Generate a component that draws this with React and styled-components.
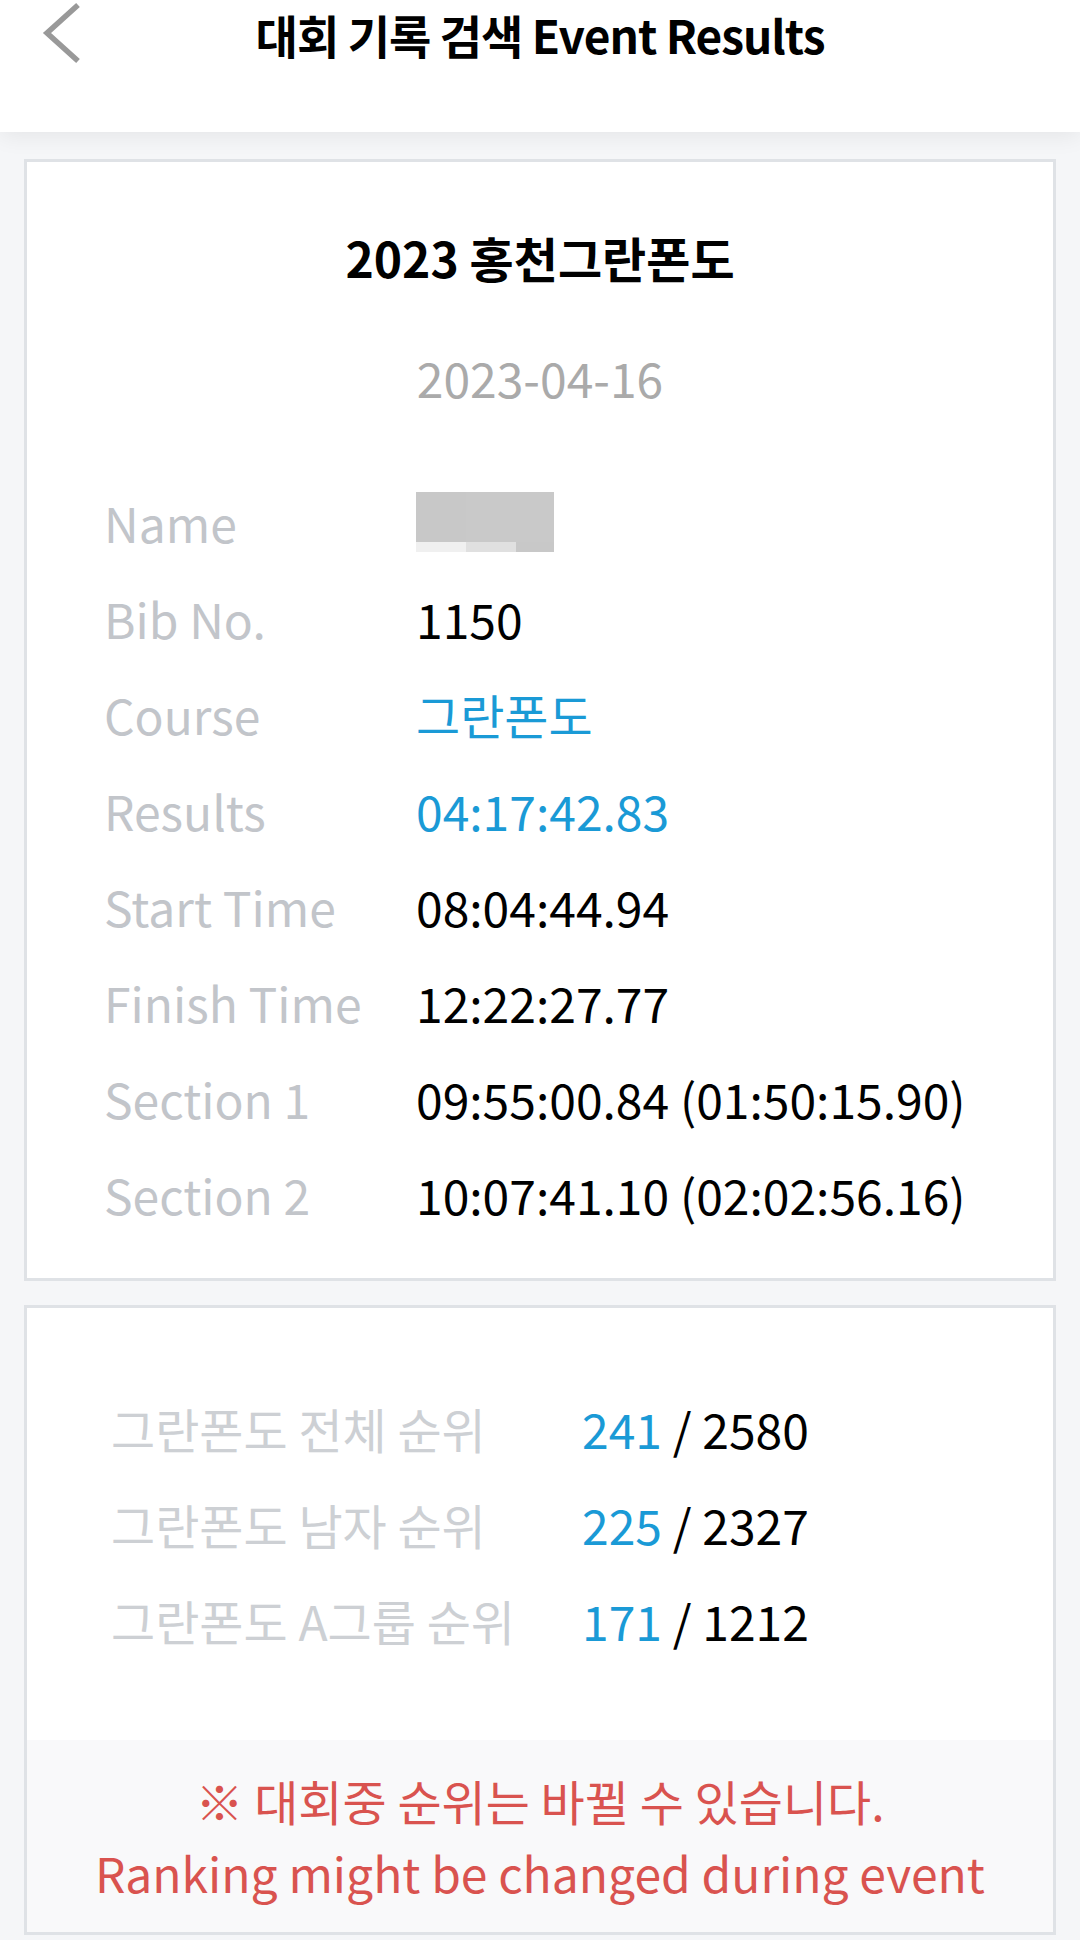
import React from "react";
import styled, { createGlobalStyle } from "styled-components";

const Global = createGlobalStyle`
  html, body { margin: 0; padding: 0; background: #f5f6f8; }
  body { font-family: "Noto Sans CJK KR", "Noto Sans", sans-serif; color: #111; }
`;

const Page = styled.div`
  width: 1080px;
  min-height: 1940px;
  background: #f5f6f8;
`;

const Header = styled.header`
  position: relative;
  z-index: 2;
  height: 132px;
  background: #fff;
  box-shadow: 0 4px 22px rgba(0, 0, 0, 0.07);
  display: grid;
  grid-template-columns: 1fr auto 1fr;
  align-items: start;
`;

const BackButton = styled.button`
  justify-self: start;
  margin: 2px 0 0 42px;
  padding: 0;
  border: 0;
  background: none;
  width: 40px;
  height: 64px;
  display: flex;
`;

const Title = styled.h1`
  margin: 0;
  font-size: 46px;
  line-height: 68px;
  font-weight: 700;
  letter-spacing: -1px;
  color: #000;
  white-space: nowrap;
`;

const Main = styled.main`
  padding: 27px 24px 0;
  display: flex;
  flex-direction: column;
  gap: 24px;
`;

const Card = styled.section`
  background: #fff;
  border: 3px solid #dfe2e6;
  display: flex;
  flex-direction: column;
`;

const InfoBody = styled.div`
  padding: 47px 0 36px;
  display: flex;
  flex-direction: column;
`;

const EventName = styled.h2`
  margin: 0;
  text-align: center;
  font-size: 48px;
  line-height: 96px;
  font-weight: 700;
  color: #000;
`;

const EventDate = styled.div`
  margin-top: 24px;
  text-align: center;
  font-size: 48px;
  line-height: 96px;
  color: #aaaaaa;
`;

const InfoTable = styled.div`
  margin-top: 49px;
  padding-left: 77px;
  display: grid;
  grid-template-columns: 312px 1fr;
  grid-auto-rows: 96px;
  font-size: 48px;
  line-height: 96px;
`;

const Label = styled.div`
  color: #c2c5ca;
  white-space: nowrap;
`;

const Value = styled.div`
  color: ${(p) => (p.$accent ? "#1a9ad6" : "#000")};
  white-space: nowrap;
  display: flex;
  align-items: center;
`;

const RankBody = styled.div`
  padding: 72px 0 72px 84px;
  display: grid;
  grid-template-columns: 471px 1fr;
  grid-auto-rows: 96px;
  font-size: 48px;
  line-height: 96px;
`;

const RankLabel = styled.div`
  color: #cdd0d4;
  white-space: nowrap;
`;

const RankValue = styled.div`
  color: #000;
  white-space: nowrap;
`;

const Rank = styled.span`
  color: #1a9ad6;
`;

const Notice = styled.div`
  background: #f9f9fa;
  padding: 24px 0;
  text-align: center;
  font-size: 48px;
  line-height: 72px;
  color: #d9534f;
`;

const NoticeLine = styled.div`
  white-space: nowrap;
`;

const Chevron = () => (
  <svg width="40" height="64" viewBox="0 0 40 64">
    <polyline points="36,3 5,31 36,59" fill="none" stroke="#999" strokeWidth="5.5" />
  </svg>
);

const Mosaic = () => (
  <svg width="138" height="60" viewBox="0 0 138 60">
    <rect x="0" y="0" width="50" height="50" fill="#c8c8c8" />
    <rect x="50" y="0" width="88" height="50" fill="#c9c9c9" />
    <rect x="0" y="50" width="50" height="10" fill="#f0f0f0" />
    <rect x="50" y="50" width="50" height="10" fill="#e0e0e0" />
    <rect x="100" y="50" width="38" height="10" fill="#c8c8c8" />
  </svg>
);

const info = [
  { label: "Bib No.", value: "1150" },
  { label: "Course", value: "그란폰도", accent: true },
  { label: "Results", value: "04:17:42.83", accent: true },
  { label: "Start Time", value: "08:04:44.94" },
  { label: "Finish Time", value: "12:22:27.77" },
  { label: "Section 1", value: "09:55:00.84 (01:50:15.90)" },
  { label: "Section 2", value: "10:07:41.10 (02:02:56.16)" },
];

const ranks = [
  { label: "그란폰도 전체 순위", rank: "241", total: "2580" },
  { label: "그란폰도 남자 순위", rank: "225", total: "2327" },
  { label: "그란폰도 A그룹 순위", rank: "171", total: "1212" },
];

export default function App() {
  return (
    <Page>
      <Global />
      <Header>
        <BackButton aria-label="back">
          <Chevron />
        </BackButton>
        <Title>대회 기록 검색 Event Results</Title>
        <div />
      </Header>
      <Main>
        <Card>
          <InfoBody>
            <EventName>2023 홍천그란폰도</EventName>
            <EventDate>2023-04-16</EventDate>
            <InfoTable>
              <Label>Name</Label>
              <Value>
                <Mosaic />
              </Value>
              {info.map((r) => (
                <React.Fragment key={r.label}>
                  <Label>{r.label}</Label>
                  <Value $accent={r.accent}>{r.value}</Value>
                </React.Fragment>
              ))}
            </InfoTable>
          </InfoBody>
        </Card>
        <Card>
          <RankBody>
            {ranks.map((r) => (
              <React.Fragment key={r.label}>
                <RankLabel>{r.label}</RankLabel>
                <RankValue>
                  <Rank>{r.rank}</Rank> / {r.total}
                </RankValue>
              </React.Fragment>
            ))}
          </RankBody>
          <Notice>
            <NoticeLine>※ 대회중 순위는 바뀔 수 있습니다.</NoticeLine>
            <NoticeLine>Ranking might be changed during event</NoticeLine>
          </Notice>
        </Card>
      </Main>
    </Page>
  );
}
